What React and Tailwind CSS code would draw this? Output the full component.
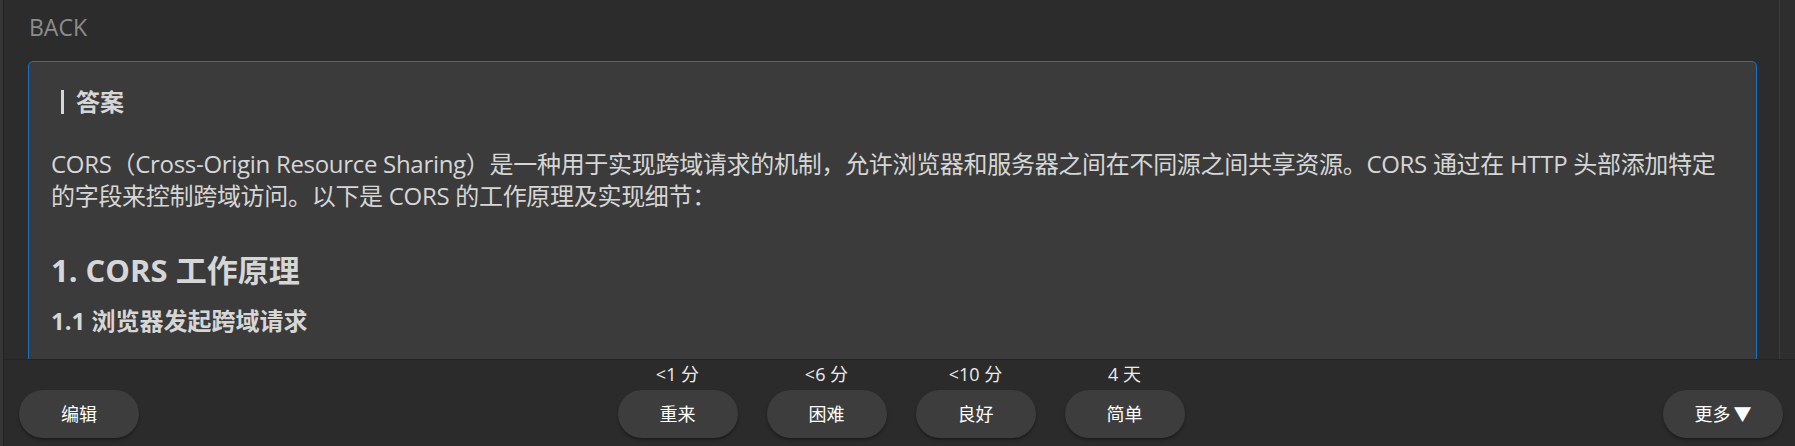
import React from 'react';

const intervals = [
    { label: '<1 分', text: '重来' },
    { label: '<6 分', text: '困难' },
    { label: '<10 分', text: '良好' },
    { label: '4 天', text: '简单' },
];

const Pill = ({ children }) => (
    <button className="w-[120px] h-[48px] rounded-[24px] bg-[#3d3d3d] text-white text-[18px] shadow-[0_2px_3px_rgba(0,0,0,0.35)]">
        {children}
    </button>
);

export default function App() {
    return (
        <div className="h-[446px] w-full flex bg-[#2c2c2c] overflow-hidden font-['Open_Sans','Noto_Sans_CJK_SC',sans-serif]">
            <div className="w-[3px] bg-[#363636] border-r border-[#222222] box-content" />

            <div className="flex-1 min-w-0 flex flex-col">
                <div className="flex-1 min-h-0 flex">
                    <div className="flex-1 min-w-0 pl-[24px] pr-[22px]">
                        <div className="h-[61px] pt-[11px] pl-[1px] text-[23px] leading-[32px] text-[#8c8c8c]">BACK</div>

                        <div className="border border-[#1a72c6] rounded-[5px] bg-[#3b3b3b] px-[22px] pt-[24px] text-[#d6d6d6]">
                            <div className="flex items-center pl-[10px] h-[32px] text-[24px] font-bold">
                                <span className="w-[3px] h-[24px] bg-[#d6d6d6] mr-[12px]" />
                                答案
                            </div>

                            <p className="mt-[30px] text-[24px] leading-[32px] tracking-[-0.3px]">
                                CORS（Cross-Origin Resource Sharing）是一种用于实现跨域请求的机制，允许浏览器和服务器之间在不同源之间共享资源。CORS 通过在 HTTP 头部添加特定的字段来控制跨域访问。以下是 CORS 的工作原理及实现细节：
                            </p>

                            <h2 className="mt-[38px] text-[31px] leading-[40px] font-bold">1. CORS 工作原理</h2>
                            <h3 className="mt-[15px] text-[24px] leading-[32px] font-bold">1.1 浏览器发起跨域请求</h3>
                            <div className="h-[60px]" />
                        </div>
                    </div>
                    <div className="w-[15px] border-l border-[#3c3c3c] bg-[#2e2e2e] box-content" />
                </div>

                <div className="h-[87px] shrink-0 border-t border-[#232323] bg-[#2b2b2b] flex items-end justify-between pl-[15px] pr-[11px] pb-[8px]">
                    <Pill>编辑</Pill>

                    <div className="flex gap-[29px]">
                        {intervals.map((item) => (
                            <div key={item.text} className="flex flex-col items-center">
                                <span className="text-[18px] leading-[22px] mb-[5px] text-[#ececec]">{item.label}</span>
                                <Pill>{item.text}</Pill>
                            </div>
                        ))}
                    </div>

                    <div className="w-[121px]">
                        <Pill>
                            更多<span className="ml-[3px]">▼</span>
                        </Pill>
                    </div>
                </div>
            </div>
        </div>
    );
}
